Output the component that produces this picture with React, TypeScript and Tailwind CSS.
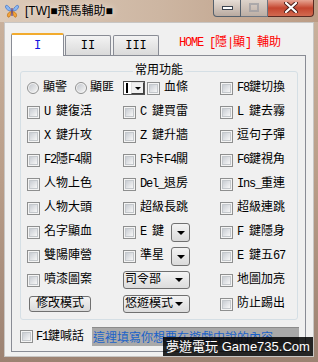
import React from "react";

const ui = "font-['Liberation_Mono','Noto_Sans_CJK_TC',monospace] text-[12px] leading-[14px] text-black";

// half-width latin runs are narrowed so they sit like the bitmap font's 6px cells
function T({ s }: { s: string }) {
  const parts = s.split(/([\x20-\x7e]+)/).filter(Boolean);
  return (
    <>
      {parts.map((p, i) =>
        /^[\x20-\x7e]+$/.test(p) ? (
          <span key={i} className="tracking-[-1.2px]">
            {p}
          </span>
        ) : (
          <span key={i}>{p}</span>
        )
      )}
    </>
  );
}

function Box() {
  return (
    <span className="flex h-[13px] w-[13px] shrink-0 items-center justify-center border border-[#8e8f8f] bg-[#f4f4f4]">
      <span className="h-[9px] w-[9px] border border-[#c4c8cc] bg-linear-to-br from-[#c9cdd3] to-[#f7f7f7]" />
    </span>
  );
}

function Radio() {
  return (
    <span className="flex h-[12px] w-[12px] shrink-0 items-center justify-center rounded-full border border-[#8e8f8f] bg-[#f4f4f4]">
      <span className="h-[8px] w-[8px] rounded-full bg-linear-to-br from-[#c4c8ce] to-[#f4f4f4]" />
    </span>
  );
}

function Arrow() {
  return <span className="h-0 w-0 border-x-[4px] border-t-[4px] border-x-transparent border-t-black" />;
}

function Check({ label }: { label: string }) {
  return (
    <div className="flex h-[24px] items-center gap-[4px]">
      <Box />
      <span className="whitespace-nowrap">
        <T s={label} />
      </span>
    </div>
  );
}

function DropBtn() {
  return (
    <span className="flex h-[19px] w-[19px] items-center justify-center rounded-[3px] border border-[#707070] bg-linear-to-b from-[#f3f3f3] to-[#dadada] pt-[2px]">
      <Arrow />
    </span>
  );
}

function Combo({ text }: { text: string }) {
  return (
    <div className="flex h-[18px] w-[67px] items-center rounded-[3px] border border-[#707070] bg-linear-to-b from-[#f3f3f3] to-[#dcdcdc] pl-[1px] pr-[6px]">
      <span className="w-[50px] overflow-hidden whitespace-nowrap">{text}</span>
      <span className="ml-auto flex">
        <Arrow />
      </span>
    </div>
  );
}

function MiniCombo() {
  return (
    <div className="flex h-[14px] w-[22px] border border-[#505050] bg-white">
      <span className="ml-[2px] mt-[1px] h-[10px] w-[2px] bg-black" />
      <span className="ml-auto flex w-[13px] items-center justify-center border border-[#404040] border-l-[#e0e0e0] border-t-[#e0e0e0] bg-[#f0f0f0]">
        <span className="h-0 w-0 border-x-[3px] border-t-[3px] border-x-transparent border-t-black" />
      </span>
    </div>
  );
}

function Butterfly() {
  return (
    <svg width="16" height="16" viewBox="0 0 16 16" className="ml-[4px] mt-[3px] shrink-0">
      <path d="M7.5 8 C5 2 1 1 1.5 4 C2 6.5 4.5 8 7.5 8Z" fill="#8cb8f4" stroke="#3d6fc0" strokeWidth="0.7" />
      <path d="M8.5 8 C11 2 15 1 14.5 4 C14 6.5 11.5 8 8.5 8Z" fill="#8cb8f4" stroke="#3d6fc0" strokeWidth="0.7" />
      <path d="M7.5 8.5 C4 9 2.5 12 4 14 C5.5 15 7 12 7.5 8.5Z" fill="#f4a43a" stroke="#b86a10" strokeWidth="0.7" />
      <path d="M8.5 8.5 C12 9 13.5 12 12 14 C10.5 15 9 12 8.5 8.5Z" fill="#f4a43a" stroke="#b86a10" strokeWidth="0.7" />
      <rect x="7.4" y="5" width="1.2" height="8" rx="0.6" fill="#5a3a80" />
    </svg>
  );
}

export default function App() {
  return (
    <div className="relative h-[362px] w-[318px] overflow-hidden bg-linear-to-b from-[#cbb39e] via-[#b99d88] to-[#9c8272]">
      {/* title bar */}
      <div className="flex h-[22px] items-start bg-linear-to-r from-[#dccab9] via-[#cdb6a2] to-[#bb9c85]">
        <Butterfly />
        <span className="ml-[5px] mt-[4px] font-['Liberation_Sans','Noto_Sans_CJK_TC',sans-serif] text-[12px] leading-[14px] text-black [text-shadow:0_0_6px_#f3ebe3]">
          [TW]■飛馬輔助■
        </span>
        <div className="ml-auto mr-[4px] flex h-[17px]">
          <div className="flex w-[28px] items-start justify-center rounded-bl-[4px] border border-t-0 border-[#55606c] bg-linear-to-b from-[#e6ddd5] to-[#b9aaa0] pt-[6px]">
            <span className="h-[4px] w-[11px] border border-[#3b4450] bg-white" />
          </div>
          <div className="flex w-[27px] items-start justify-center border-b border-r border-[#6b7480] bg-linear-to-b from-[#ddd3cb] to-[#bcaea4] pt-[3px]">
            <span className="h-[9px] w-[10px] border-2 border-[#9a9aa0] opacity-70" />
          </div>
          <div className="flex w-[46px] items-start justify-center rounded-br-[4px] border border-t-0 border-l-0 border-[#5a2a22] bg-linear-to-b from-[#e6a493] via-[#c4452f] to-[#d26a50] pt-[2px]">
            <svg width="14" height="11" viewBox="0 0 14 11">
              <path d="M2 1 L12 10 M12 1 L2 10" stroke="#4a1e18" strokeWidth="4" strokeLinecap="round" />
              <path d="M2 1 L12 10 M12 1 L2 10" stroke="#ffffff" strokeWidth="2.2" strokeLinecap="round" />
            </svg>
          </div>
        </div>
      </div>

      {/* client area */}
      <div className={`mx-[4px] h-[335px] border border-[#c8c6c4] bg-[#f0f0f0] pl-[6px] pt-[10px] ${ui}`}>
        <div className="flex h-[22px] items-end">
          <div className="relative z-10 -mb-px flex h-[23px] w-[53px] items-center justify-center rounded-t-[2px] border border-b-0 border-[#898c95] border-t-2 border-t-[#f2ab2e] bg-white pt-[1px] text-[#1414e0]">
            I
          </div>
          <div className="ml-[1px] flex h-[20px] w-[46px] items-center justify-center rounded-t-[2px] border border-b-0 border-[#898c95] bg-linear-to-b from-[#f3f3f3] to-[#dadada] pt-[1px]">
            II
          </div>
          <div className="ml-[2px] flex h-[20px] w-[46px] items-center justify-center rounded-t-[2px] border border-b-0 border-[#898c95] bg-linear-to-b from-[#f3f3f3] to-[#dadada] pt-[1px]">
            III
          </div>
          <span className="ml-[20px] mt-[3px] self-start whitespace-nowrap text-[#ff0000]">
            <T s="HOME [" />
            隱
            <T s="|" />
            顯
            <T s="] " />
            輔助
          </span>
        </div>

        <div className="h-[297px] w-[295px] border border-[#898c95] bg-[#f0f0f0]">
          {/* group box */}
          <div className="relative ml-[8px] mt-[15px] h-[249px] w-[278px] rounded-[3px] border border-[#d5dfe5] pb-[3px] pl-[6px] pt-[4px]">
            <span className="absolute left-1/2 top-[-8px] -translate-x-1/2 bg-[#f0f0f0] px-[2px]">常用功能</span>
            <div className="grid auto-rows-[24px] grid-cols-[96px_97px_1fr]">
              <div className="flex items-center">
                <Radio />
                <span className="ml-[4px]">顯警</span>
                <span className="ml-[8px] flex">
                  <Radio />
                </span>
                <span className="ml-[3px]">顯匪</span>
              </div>
              <div className="flex items-center">
                <MiniCombo />
                <span className="ml-[2px] flex">
                  <Box />
                </span>
                <span className="ml-[4px]">血條</span>
              </div>
              <Check label="F8鍵切換" />

              <Check label="U 鍵復活" />
              <Check label="C 鍵買雷" />
              <Check label="L 鍵去霧" />

              <Check label="X 鍵升攻" />
              <Check label="Z 鍵升牆" />
              <Check label="逗句子彈" />

              <Check label="F2隱F4關" />
              <Check label="F3卡F4關" />
              <Check label="F6鍵視角" />

              <Check label="人物上色" />
              <Check label="Del_退房" />
              <Check label="Ins_重連" />

              <Check label="人物大頭" />
              <Check label="超級長跳" />
              <Check label="超級連跳" />

              <Check label="名字顯血" />
              <div className="flex items-center gap-[4px]">
                <Box />
                <span className="w-[27px] whitespace-nowrap">
                  <T s="E " />
                  鍵
                </span>
                <DropBtn />
              </div>
              <Check label="F 鍵隱身" />

              <Check label="雙陽陣營" />
              <div className="flex items-center gap-[4px]">
                <Box />
                <span className="w-[27px] whitespace-nowrap">準星</span>
                <DropBtn />
              </div>
              <Check label="E 鍵五67" />

              <Check label="噴漆圖案" />
              <div className="flex items-center">
                <Combo text="司令部" />
              </div>
              <Check label="地圖加亮" />

              <div className="flex items-center pl-[2px]">
                <button className="flex h-[16px] w-[62px] items-center justify-center rounded-[3px] border border-[#707070] bg-linear-to-b from-[#f3f3f3] to-[#dadada]">
                  修改模式
                </button>
              </div>
              <div className="flex items-center">
                <Combo text="悠遊模式" />
              </div>
              <Check label="防止踢出" />
            </div>
          </div>

          {/* F1 row */}
          <div className="ml-[8px] mt-[7px] flex h-[19px] items-center">
            <Box />
            <span className="ml-[3px] w-[56px] whitespace-nowrap">
              <T s="F1" />
              鍵喊話
            </span>
            <div className="flex h-[19px] w-[207px] items-center border-t border-[#8c8c8c] bg-[#a9a9a9] pl-[1px] font-['Noto_Sans_CJK_TC',sans-serif] text-[12px] text-[#1a62c8]">
              這裡填寫你想要在遊戲中說的內容
            </div>
          </div>
        </div>
      </div>

      {/* watermark */}
      <div className="absolute left-[163px] top-[337px] flex h-[19px] w-[150px] items-center justify-center whitespace-nowrap bg-black/85 font-['Liberation_Sans','Noto_Sans_CJK_TC',sans-serif] text-[13px] leading-[15px] text-white">
        夢遊電玩 Game735.Com
      </div>
    </div>
  );
}
